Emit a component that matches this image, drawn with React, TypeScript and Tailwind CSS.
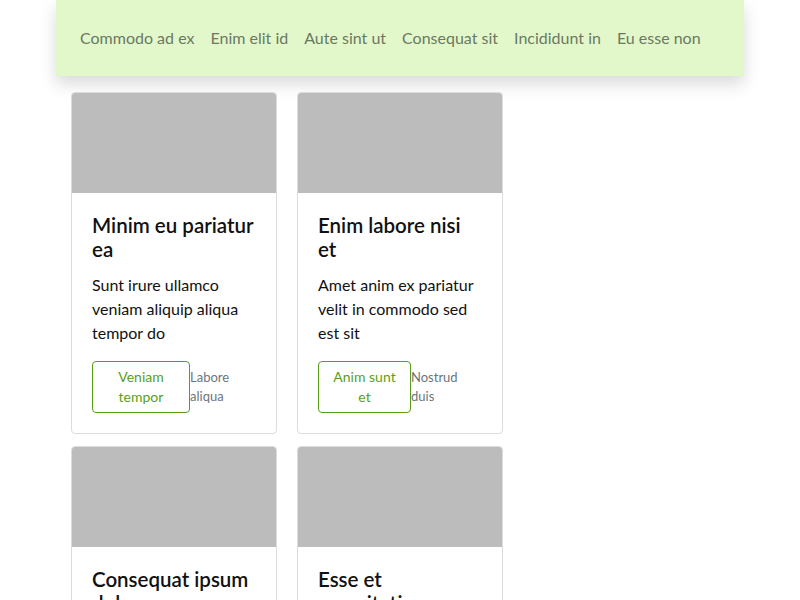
const navItems = [
  "Commodo ad ex",
  "Enim elit id",
  "Aute sint ut",
  "Consequat sit",
  "Incididunt in",
  "Eu esse non",
];

const cards = [
  {
    title: "Minim eu pariatur ea",
    text: "Sunt irure ullamco veniam aliquip aliqua tempor do",
    button: "Veniam tempor",
    note: "Labore aliqua",
    btnWidth: "w-[98px]",
  },
  {
    title: "Enim labore nisi et",
    text: "Amet anim ex pariatur velit in commodo sed est sit",
    button: "Anim sunt et",
    note: "Nostrud duis",
    btnWidth: "w-[93px]",
  },
  {
    title: "Consequat ipsum dolor",
    text: "Ea laboris cillum officia ut magna elit",
    button: "Irure minim",
    note: "Aliqua sed",
    btnWidth: "w-[98px]",
  },
  {
    title: "Esse et exercitation",
    text: "Lorem velit nulla proident culpa qui",
    button: "Duis enim",
    note: "Sint esse",
    btnWidth: "w-[93px]",
  },
];

export default function App() {
  return (
    <div className="min-h-screen bg-white font-['Lato',sans-serif] text-[#111]">
      <div className="mx-auto w-[688px]">
        {/* Top nav */}
        <nav className="flex h-[76px] items-center gap-4 bg-[#e2f8cb] px-6 shadow-[0_8px_16px_rgba(0,0,0,0.15)]">
          {navItems.map((item) => (
            <a key={item} href="#" className="whitespace-nowrap text-base text-[#6b7862]">
              {item}
            </a>
          ))}
        </nav>

        {/* Cards */}
        <div className="mt-4 grid grid-cols-[206px_206px] gap-x-5 gap-y-3 px-[15px]">
          {cards.map((c) => (
            <div
              key={c.title}
              className="overflow-hidden rounded border border-[#dcdcdc] bg-white"
            >
              <div className="h-[100px] bg-[#bcbcbc]" />
              <div className="px-5 pt-5 pb-5">
                <h3 className="text-[20.5px] leading-6 font-semibold">{c.title}</h3>
                <p className="mt-3 text-base leading-6">{c.text}</p>
                <div className="mt-4 flex items-center">
                  <button
                    className={`${c.btnWidth} shrink-0 rounded border border-[#5a9e1a] px-2 py-[5px] text-sm leading-5 text-[#5a9e1a]`}
                  >
                    {c.button}
                  </button>
                  <span className="text-[13px] leading-[19px] text-[#6c757d]">
                    {c.note}
                  </span>
                </div>
              </div>
            </div>
          ))}
        </div>
      </div>
    </div>
  );
}
